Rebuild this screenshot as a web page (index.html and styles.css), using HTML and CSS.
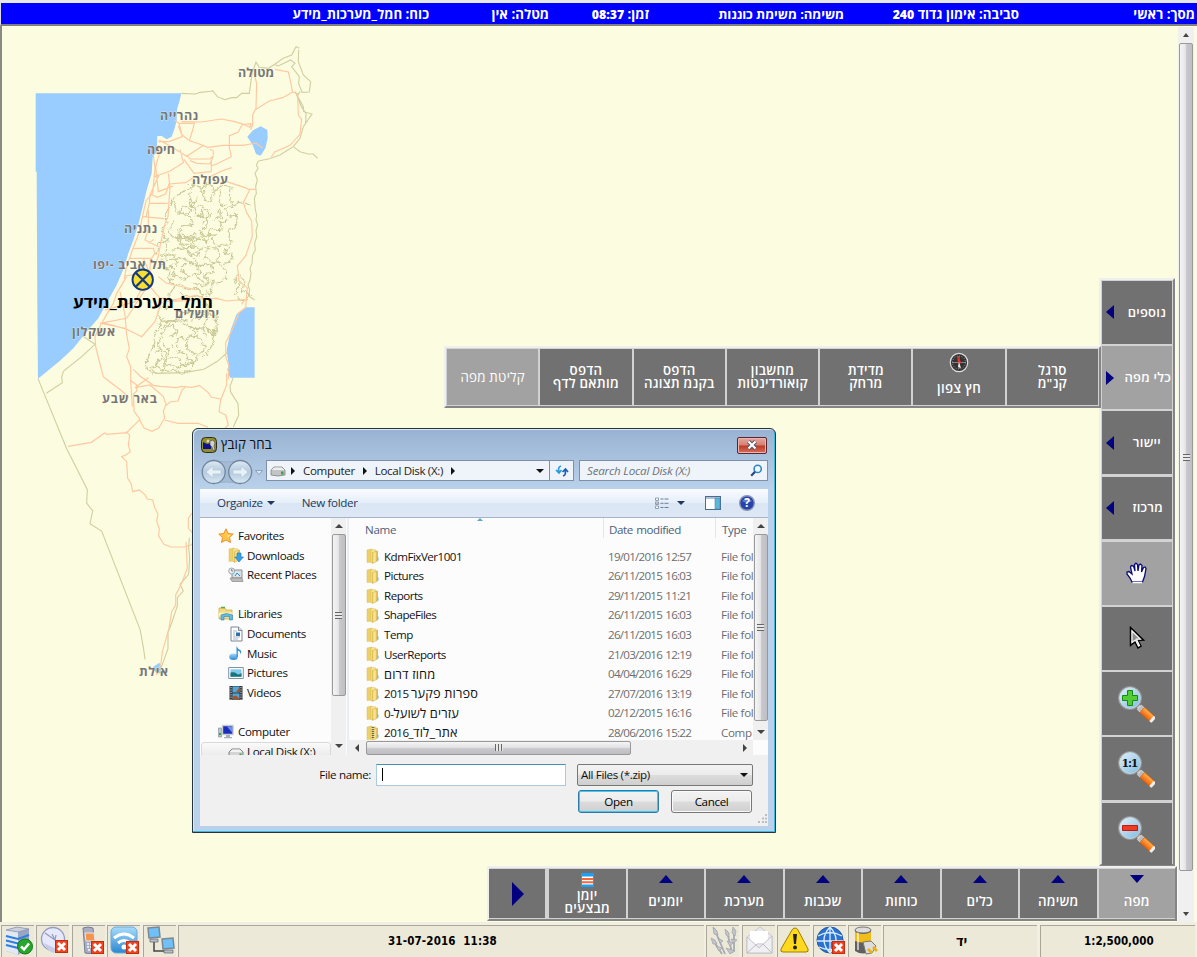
FILE: index.html
```html
<!DOCTYPE html>
<html lang="he">
<head>
<meta charset="utf-8">
<title>מסך ראשי</title>
<link rel="stylesheet" href="styles.css">
</head>
<body>
<svg class="defs" width="0" height="0" aria-hidden="true">
  <defs>
    <linearGradient id="gold" x1="0" x2="1" y1="0" y2="0"><stop offset="0" stop-color="#f0d264"/><stop offset=".5" stop-color="#faeaa0"/><stop offset="1" stop-color="#d3a530"/></linearGradient>
    <linearGradient id="glass" x1="0" x2="1" y1="0" y2="1"><stop offset="0" stop-color="#e4f3fb"/><stop offset="1" stop-color="#7cb9de"/></linearGradient>
    <linearGradient id="handle" x1="0" x2="0" y1="0" y2="1"><stop offset="0" stop-color="#ffb24a"/><stop offset="1" stop-color="#f0600c"/></linearGradient>
    <linearGradient id="orb" x1="0" x2="0" y1="0" y2="1"><stop offset="0" stop-color="#dfe9f4"/><stop offset=".5" stop-color="#b4cade"/><stop offset="1" stop-color="#d8e8f4"/></linearGradient>
    <linearGradient id="blueface" x1="0" x2="0" y1="0" y2="1"><stop offset="0" stop-color="#a8dcfa"/><stop offset="1" stop-color="#2b87d0"/></linearGradient>
    <symbol id="folder" viewBox="0 0 14 16"><path d="M1 2l5-1v13l-5 .5z" fill="#ecd06a" stroke="#dcbd5a" stroke-width=".5"/><path d="M5 1.500l5 .5v11l-5 2z" fill="#f8e690" stroke="#d8b650" stroke-width=".5"/><path d="M6.500 4.500l5-1.500v10l-5 2.500z" fill="url(#gold)" stroke="#cda63a" stroke-width=".5"/><path d="M11.300 9.500h1.200v3h-1.200z" fill="#6abbe0"/></symbol>
    <symbol id="lens" viewBox="0 0 38 38"><path d="M21 21l4 4" stroke="#ccc" stroke-width="4"/><g transform="rotate(42 23 23)"><rect x="22" y="20" width="5" height="6" fill="#bbb" stroke="#eee" stroke-width=".6"/><rect x="26" y="19.500" width="14" height="7" rx="1" fill="url(#handle)" stroke="#d95700" stroke-width=".6"/><rect x="38.500" y="19.500" width="3" height="7" rx="1" fill="#eee"/></g><circle cx="13" cy="13" r="11.300" fill="url(#glass)" stroke="#929292" stroke-width="1.600"/><circle cx="13" cy="13" r="10.500" fill="none" stroke="#c9dce8" stroke-width=".8"/></symbol>
    <symbol id="xmark" viewBox="0 0 13 13"><rect x=".5" y=".5" width="12" height="12" fill="#ef4321" stroke="#c42c10"/><path d="M3 3l7 7M10 3l-7 7" stroke="#fff" stroke-width="3"/></symbol>
  </defs>
</svg>
<div class="app">
  <header class="banner" dir="rtl">
    <span>מסך: ראשי</span><span>סביבה: אימון גדוד <b>240</b></span><span>משימה: משימת כוננות</span><span>זמן: <b>08:37</b></span><span>מטלה: אין</span><span>כוח: חמל_מערכות_מידע</span>
  </header>

  <main class="stage">
    <svg class="map" viewBox="0 26 1178 896">
      <defs><filter id="rough" x="-5%" y="-5%" width="110%" height="110%"><feTurbulence type="fractalNoise" baseFrequency=".06" numOctaves="3" seed="4"/><feDisplacementMap in="SourceGraphic" scale="22" xChannelSelector="R" yChannelSelector="G"/></filter></defs>
      <g transform="translate(20 30) scale(.33333)">
        <g fill="#99ccff">
          <path d="M47 190H484L478 215 471 238 470 272 463 298 455 320 440 328 425 318 412 318 410 365 398 382 395 430 380 480 368 530 356 580 340 630 325 670 310 718 290 765 262 815 235 865 200 905 160 955 120 992 54 1046 52 830 50 425H47z"/>
          <path d="M682 320l18-20 22-11 20 11 1 25-7 30-14 22-14-5-10-27z"/>
          <path d="M676 832H704V1043H630L622 1020 626 1005 620 960 632 900 650 852z"/>
          <path d="M398 1912l20-14 5 12-1 20-14-2z"/>
        </g>
        <g class="border">
          <path d="M484 190l42 2 15-5 32-3 5-2 14 18 23 9 20-6h15l15-13h23l8-60 12-33 10 15 27 3 17-11 28-19 25-10 13-25 10 5"/>
          <path d="M765 104l10 4 37-18 13 10-10 10 23 30-2 20 10 27 22-1 4-31-22-20-15-40 1-35M840 185l-8 12 18 33 1 15 25 7-26 38-10 35-20 25-20 12-20 13-32 11-33 7M826 185l18 45 14 20-1 30M820 350l20 15 25 7h15l13 13"/>
          <path d="M715 393l-6 12 5 10-9 15 7 20-5 20 2 20-6 15 3 35 4 15-2 15 5 15-5 15 2 20-6 20 2 20-8 15-2 25-6 15 3 15-3 20-6 15 5 15-3 18 18 12"/>
          <path d="M188 918l37 25-40 37-55 44-5 18 2 16-48 32M54 1046l86 210 48 95 14 28-2 40 18 24-8 38 35 22 115 295 3 15 8 45 4 30M640 1043l-10 25 2 18 22 35 2 35-16 35"/>
          <path d="M508 1523l-2 30 3 30-3 50-26 30 10 20-18 20v25l-20 60-8 18v50l-18 50-10 25"/>
        </g>
        <g class="border dense">
          <path d="M515 465l30 6 20-12 20 25 20-18 25 2-2 35 10 25-22 10 16 24 20-8-2 28-20 16-6 20 10 20-22 30 24 5-6 24-28 5 20 25-12 30-30 2-10 30-14 20 12 20-12 22-46-4-26 4-26 26-26-4-20-18 6-20 34-10-6-30 18-24-20-20 6-30-30-16 18-24-30-10 8-30 28-10-20-28 18-22-4-26 16-40 22-20z"/>
          <path d="M460 508l10 40 40 5 10 30-38 8-4 32 24 8 34-10-20 30-42 8M515 465l-6 30 10 36 32-6-10 38 22-8-20 28M470 600l20 30 30-16 40 22 10-40 40 4-10-24 22-6M545 471l8 40 20 4 10-30M455 660l40-10 20 24 36-22 20 10M560 650l-6 34 26 12 20-22-16-20zM440 690l50-6 40 24 50-6 26-8M450 730l40 20 34-16 26 30 34-14M520 760l30 10 20-10M500 700l-20 20 30 20 30-10-10-25"/>
          <path d="M535 500l-20 25 12 30 30 5 5 30-24 12 14 18 34-6M465 575l-20 25 15 20 24 4-6 20 28 12M425 630l16 20-6 24 28 8 6 20M430 720l26-12 10 30-22 14 20 20M590 610l-16 20 22 20 24-6M520 690l24 18 30-6 6 24-30 10 24 22M485 535l18-6 10 16-14 12-16-8zM545 545l14-8 8 14-14 10z"/>
          <path d="M470 620l20-8 10 14 24-4-10 22-30-2zM500 655l24-6 16 14-10 16-22-4zM565 560l30-20 10 20-24 14M460 770l24-8 14 16 30-6 20 20 30-10M480 790l30 10 40-4M600 480l-6 34 20 12M640 525l20-8 35 12"/>
          <path d="M648 745l8 25-12 20 26 22 24-18-30-10 10-35-20-14z"/>
          <path d="M425 870l-15 30-6 40-10 20-15 40 4 20 20 10 26-8 10-14-20-20-24 30M425 870l35 2 20-8 25 8 30-6 30-18 20 10 4 40-10 40-20 36-30 5-10 20-40 12-40-10-16-26-8-30 14-40 26-30 40-4M425 940l24 20-14 30 40-10 10 30 25-30-40-20 10-40 30 10 16-30-40-20M500 925l30-10 25 35-5 15-20 10-30-20zM565 860l-10 30 30 20M550 880l30 40 6-30"/>
          <path d="M415 905l20-20 30 5 5 20-25 10M405 1005l30 20 30-5 15 15 30-12 10-30-24-10M500 880l20 20 30-4 6 20M410 960l30 6 20-16"/>
        </g>
        <path class="border" d="M395 1018l12 12 85-2 60-10 40-24 32-28"/>
        <g class="road">
          <path d="M484 275l60 1 60-9 40 8 27 8 22-2-4 13M702 130l8 30-2 75-10 20v30l-6 15M765 118l40 8 13 60-30 17-40 10-42 26M818 186l15 5 2 65 10 12-5 45-30 33-46 20-10 15M415 335h32l40-15-10-40-13-10M478 280h45l-5 20-10 32 30 10 25 10 46-6h60l39-7 20 15M690 292l-22-10-14 25-26 10v35l6 28-44 22-16 6M505 330l-20-17-10-25M552 345l-52 34-48-30-34-18M480 358l10 40-40 25-50 18M574 425l-52 5-30-42M500 375l10 12h60l10-10-10 25-40-2-20-8M574 425V390M580 375v-12l-10-5M570 440l30-15 35-12M417 435l-27 60-2 25-10 40M400 375l5 40-7 75-20 22-10 45-10 50-20 50-20 60-5 30M415 345l2 30-10 35 8 75 45-17M392 492l20 10 25-10 10-30 50-4 30-20M445 430l5 40-6 90-8 18-13 55-8 45-10 30M388 520h55M368 560l65 6M385 540v60l-10 30 40 20M340 655h60l5 15-14 20-2 65M330 685h60l5 15M370 685l30 70M386 640l15-12M360 760l30 10-30 15-15 30-90 25M315 738l30-5 30 30M415 740l25 20 90 20M390 770l30 35h30M620 455l55 18 10 5h22M690 478l-20 40 10 30 15 25 2 45-20 60-25 30 5 45 25 20-5 60-20 15-20 50-20 40v40l10 30-2 40"/>
          <path d="M320 740l-30 50-10 30-15 25-20 35-20 40 2 30 15 60 8 30 12 10 40 30 24 22M300 785l15 70 5 60 8 40-8 25 12 30v40l5 80M240 880l80-15 35-55 20-30M245 880l70 15 50 25 40-45 20-60M245 878l70 18M440 814l60-2 30-5 60-2 30 8 55-5-10 15M450 812l80-16 20 8M340 1018l20 20 40 28 20 3 50 4 14-4 30 3 25-5 25 20 10 15 30 5"/>
          <path d="M330 1050l20 15v18l-10 10 2 50 18 25-40 40-60 5-6-4-40 28-70 12M358 1168l14 26 24 10 20-10 18-30-4-20 8-20-8-24-40-35-45 8 40-30M434 1130l16-14 24-3 12-33 10-8M434 1170l40 10h60l30 12M620 1030v35l-18 45-5 35 20 10 8 30-20 20M317 1205l12 10-4 30 6 20-14 10-12 5 15 15 3 50 10 15 5 25 20-5 18 15 6 12 16 3 6 23 10 20-4 20 8 25-2 20 16 25 20 8h40l20-5 14-13 15-10M498 1535l4 80-15 40-20 40v30l-12 20-8 50-20 70-4 35-14 35M515 1450l-10 15v30l14 15"/>
        </g>
      </g>
      <g class="places">
        <text x="238" y="76.500" textLength="36">מטולה</text><text x="160" y="119.500" textLength="38">נהרייה</text><text x="147" y="154" textLength="28">חיפה</text><text x="192" y="183.500" textLength="36">עפולה</text><text x="124" y="233" textLength="33">נתניה</text><text x="93" y="268.500" textLength="73">תל אביב -יפו</text><text x="175" y="317.500" textLength="44">ירושלים</text><text x="72" y="336" textLength="43">אשקלון</text><text x="102" y="402.500" textLength="55">באר שבע</text><text x="139" y="675.500" textLength="29">אילת</text>
      </g>
      <g><circle cx="142.700" cy="279.700" r="10.200" fill="#f8df32" stroke="#153a80" stroke-width="1.900"/><path d="M136 273l13.500 13.500M149.500 273L136 286.500" stroke="#153a80" stroke-width="2.200"/></g>
      <text class="unit" x="73" y="307.500" textLength="140" lengthAdjust="spacingAndGlyphs">חמל_מערכות_מידע</text>
    </svg>

    <div class="vscroll outer-scroll"><i class="tri up"></i><div class="thumb"><b class="grip"></b></div><i class="tri down"></i></div>

    <nav class="panel side">
      <div class="btn arrow"><i class="tri left"></i><span>נוספים</span></div>
      <div class="btn arrow lit"><i class="tri right"></i><span class="wide">כלי מפה</span></div>
      <div class="btn arrow"><i class="tri left"></i><span class="mid">יישור</span></div>
      <div class="btn arrow"><i class="tri left"></i><span class="near">מרכוז</span></div>
      <div class="btn lit"><svg width="22" height="22" viewBox="0 0 22 22"><path d="M6 20L4 16 1 12V10l2-.5 3 2.500L4.500 5l1-1.500 2 .5L9 9 8.500 2.500l1.500-1.300L11.500 2.500 12 9l1-6 1.500-1L16 3.500 15.500 10l2-4.500L19 5l1 1.500-1.500 8L16.500 20z" fill="#fff" stroke="#0a0a78" stroke-width="1.300"/><path d="M6.500 20.500h9.800" stroke="#fff" stroke-width="1.500"/></svg></div>
      <div class="btn"><svg width="18" height="24" viewBox="0 0 18 24"><path d="M2.500 1.500l13 12.500-5.500.3 3 6-3 1.700L7 16l-4.500 3.500z" fill="#8f8f8f" stroke="#000" stroke-width="1.500"/><path d="M4 5v11.300L7.500 14l3 6 1-.5-3-6.300h3.700z" fill="none" stroke="#f4f4f4" stroke-width="1.200"/></svg></div>
      <div class="btn zoom"><svg width="38" height="38"><use href="#lens"/><path d="M10.500 5.500h5v5h5v5h-5v5h-5v-5h-5v-5h5z" fill="#54cc35" stroke="#178a10"/></svg></div>
      <div class="btn zoom"><svg width="38" height="38"><use href="#lens"/><text x="13" y="17.300" class="ratio" textLength="17">1:1</text></svg></div>
      <div class="btn zoom"><svg width="38" height="38"><use href="#lens"/><path d="M5.500 10.500h15v5h-15z" fill="#f03a24" stroke="#bd1c10"/></svg></div>
    </nav>

    <nav class="panel tools" dir="rtl">
      <div class="btn"><span>סרגל<br>קנ"מ</span></div>
      <div class="btn compass"><svg width="20" height="22" viewBox="0 0 20 22"><ellipse cx="10" cy="10.500" rx="8.700" ry="9.200" fill="#333" stroke="#ddd" stroke-width="1.200"/><circle cx="10" cy="10.500" r="6.500" fill="none" stroke="#999" stroke-dasharray="1 1.500"/><path d="M3 10.500h14M10 4v13" stroke="#aaa" stroke-width=".7"/><path d="M8.500 4l3.500 7-3-1z" fill="#f03030" stroke="#f03030" stroke-width=".5"/><path d="M10 10l2 6-3-1z" fill="#eee"/></svg><span>חץ צפון</span></div>
      <div class="btn"><span>מדידת<br>מרחק</span></div>
      <div class="btn"><span>מחשבון<br>קואורדינטות</span></div>
      <div class="btn"><span>הדפס<br>בקנמ תצוגה</span></div>
      <div class="btn"><span>הדפס<br>מותאם לדף</span></div>
      <div class="btn lit"><span>קליטת מפה</span></div>
    </nav>

    <nav class="panel bottom" dir="rtl">
      <div class="btn lit"><i class="tri down"></i><span>מפה</span></div>
      <div class="btn"><i class="tri up"></i><span>משימה</span></div>
      <div class="btn"><i class="tri up"></i><span>כלים</span></div>
      <div class="btn"><i class="tri up"></i><span>כוחות</span></div>
      <div class="btn"><i class="tri up"></i><span>שכבות</span></div>
      <div class="btn"><i class="tri up"></i><span>מערכת</span></div>
      <div class="btn"><i class="tri up"></i><span>יומנים</span></div>
      <div class="btn log"><svg width="13" height="14" viewBox="0 0 13 14"><rect width="13" height="14" rx="1" fill="#1da0f2"/><path d="M1 3.500h11v8H1z" fill="#fff"/><path d="M1 6h11M1 9.300h11" stroke="#f26a3c" stroke-width="2"/></svg><span>יומן<br>מבצעים</span></div>
      <div class="btn next"><i class="tri right big"></i></div>
    </nav>

    <section class="dialog">
      <div class="caption">
        <svg width="16" height="16"><rect x=".5" y=".5" width="15" height="15" rx="4" fill="#92902a" stroke="#2e2d14"/><path d="M2 5l4 2 4-1v6H2z" fill="#10108c"/><circle cx="7" cy="4" r="1.500" fill="#d8d8c0"/><path d="M9 4l3-1 2 3-1 3 1 4-2 .5L11 10 9 8z" fill="#d2d2d2" stroke="#444" stroke-width=".6"/></svg>
        <h1>בחר קובץ</h1>
        <button class="close"><svg width="12" height="10" viewBox="0 0 12 10"><path d="M2.500 1.500l7 7M9.500 1.500l-7 7" stroke="#4b4f63" stroke-width="4"/><path d="M2.500 1.500l7 7M9.500 1.500l-7 7" stroke="#fff" stroke-width="2.300"/></svg></button>
      </div>
      <div class="navrow">
        <svg class="orbs" width="64" height="26" viewBox="0 0 64 26"><path d="M13 1q14 4 27 0v24q-13-4-27 0z" fill="#a5bcd5" stroke="#8fa6c1" stroke-width=".7"/><g fill="url(#orb)" stroke="#70869c" stroke-width="1.300"><circle cx="13.700" cy="13" r="11.500"/><circle cx="40.200" cy="13" r="11.500"/></g><path d="M6 13l7-6v4h8v4h-8v4zM48 13l-7-6v4h-8v4h8v4z" fill="#e8f1f8" stroke="#b6c8d8" stroke-width=".7"/><path d="M55.500 11.500h7l-3.500 4z" fill="#dce8f4" stroke="#7f96b0" stroke-width=".8"/></svg>
        <div class="address"><svg width="16" height="12" viewBox="0 0 16 12"><path d="M1 5l3-3h8l3 3v5q-7 2-14 0z" fill="#c2c4c6" stroke="#777" stroke-width=".7"/><path d="M1.500 5l3-2.500h7l3 2.500z" fill="#eee"/><path d="M11 6.500h2.500v3H11z" fill="#35a73a"/></svg><i class="tri right"></i><span>Computer</span><i class="tri right"></i><span>Local Disk (X:)</span><i class="tri right"></i><em></em><i class="tri down"></i><b><svg width="14" height="14" viewBox="0 0 14 14"><path d="M6 2Q2.500 3 4 8M1 6l3 3 2.500-3" fill="none" stroke="#2a9ae0" stroke-width="1.700"/><path d="M8 12q3.500-1 2-6M7.500 8l3-3L13 8" fill="none" stroke="#1e5fb4" stroke-width="1.700"/></svg></b></div>
        <div class="search"><span>Search Local Disk (X:)</span><svg width="13" height="13" viewBox="0 0 13 13"><circle cx="7.700" cy="4.900" r="3.600" fill="#eef6fc" stroke="#2f86c6" stroke-width="1.600"/><path d="M5 7.800L1.200 11.700" stroke="#24468e" stroke-width="2.200"/></svg></div>
      </div>
      <div class="client">
        <div class="toolbar"><span>Organize</span><i class="tri down"></i><span class="newf">New folder</span><em></em>
          <svg width="15" height="13" viewBox="0 0 15 13"><path d="M1.500 1h3v2.500h-3zM1.500 5h3v2.500h-3zM1.500 9h3v2.500h-3z" fill="#fff" stroke="#8b9eb8"/><path d="M2.300 5.800h1.500v1H2.300z" fill="#d76a3a"/><path d="M6.500 2h3m1 0h4M6.500 6.300h3m1 0h4M6.500 10.500h3m1 0h4" stroke="#6c7d96"/></svg><i class="tri down view"></i>
          <svg class="preview" width="16" height="14"><rect x=".5" y=".5" width="15" height="13" fill="#fff" stroke="#506a8a"/><path d="M1 2h14" stroke="#a8c4dc" stroke-width="2"/><rect x="10" y="2" width="5" height="11" fill="#58b8dc" stroke="#4d87a8" stroke-width=".6"/></svg>
          <svg class="help" width="16" height="16"><circle cx="8" cy="8" r="7.300" fill="#2543a8" stroke="#8b93b5" stroke-width="1.400"/><path d="M3 6q5-5 10 0-5 3-10 0" fill="#5f80d2"/><text x="8" y="12.200" class="q">?</text></svg>
        </div>
        <div class="panes">
          <div class="places-pane">
            <ul>
              <li><svg width="16" height="16" viewBox="0 0 16 16"><path d="M8 .8l2.200 4.700 5 .6-3.700 3.400 1 5L8 12l-4.500 2.500 1-5L.8 6.100l5-.6z" fill="#ffc646" stroke="#ea8425" stroke-width=".9"/><path d="M8 3l1.500 4 3 .5-2.500 2" fill="#ffe58a"/></svg>Favorites</li>
              <li class="sub"><svg width="16" height="16" viewBox="0 0 16 16"><use href="#folder" width="14" height="16"/><path d="M9 6h4v4h2.500L11 15 6.800 10H9z" fill="#38a0e8" stroke="#1976bc" stroke-width=".6"/></svg>Downloads</li>
              <li class="sub"><svg width="16" height="16" viewBox="0 0 16 16"><path d="M4 3h10v8H4z" fill="#ddd" stroke="#8c9196"/><path d="M2 11h12l1 3.500H4z" fill="#bbb" stroke="#888" stroke-width=".7"/><path d="M6 5h5v4H6z" fill="#d7edfa"/><path d="M7 9l2-3 3 3" stroke="#3484c0" fill="none"/><circle cx="3.700" cy="4" r="3" fill="#e9eef2" stroke="#8995a0" stroke-width=".8"/><path d="M3.700 2v2h1.500" stroke="#555" fill="none" stroke-width=".7"/></svg>Recent Places</li>
              <li class="gap"></li>
              <li><svg width="16" height="16" viewBox="0 0 16 16"><path d="M1 2h6l1 2h6v9H1z" fill="#f3dc80" stroke="#c9a73d" stroke-width=".7"/><path d="M3 1.500h4" stroke="#52b043" stroke-width="1.500"/><path d="M.8 6.500h13.500v4H.8z" fill="#fbefb1"/><path d="M3 14V9q5-3 11.500 0v5h-3v-3.500H6V14z" fill="#61b9e6" stroke="#2c86bb" stroke-width=".6"/></svg>Libraries</li>
              <li class="sub"><svg width="16" height="16" viewBox="0 0 16 16"><path d="M3 1h7.500L14 4.500V15H3z" fill="#fff" stroke="#7b8794"/><path d="M10.500 1v3.500H14" fill="#d8e2ea" stroke="#7b8794"/><path d="M5 5h4M5 7h2M5 9h2M5 11h7M5 13h5" stroke="#a7b6c4"/><path d="M8 6.500h4v3.500H8z" fill="#2f6fb0"/></svg>Documents</li>
              <li class="sub"><svg width="16" height="16" viewBox="0 0 16 16"><ellipse cx="5.500" cy="11.700" rx="4.300" ry="3.300" fill="url(#blueface)"/><path d="M8.500 12V1q1 3 4 4 1.500 2 .3 4.500Q12.300 6 9.800 5.500V12z" fill="#2c8dd6"/></svg>Music</li>
              <li class="sub"><svg width="16" height="16" viewBox="0 0 16 16"><path d="M.7 2.500h14.600v11H.7z" fill="#fff" stroke="#8392a0"/><path d="M2.500 4.300h11v7.400h-11z" fill="#7ecbef"/><path d="M2.500 7.500q4-1 6 1t5-.5v3.700h-11z" fill="#19747c"/></svg>Pictures</li>
              <li class="sub"><svg width="16" height="16" viewBox="0 0 16 16"><path d="M1.500 1h13v14h-13z" fill="#31363c"/><path d="M4.500 1.500h7v6h-7zM4.500 8.500h7v6h-7z" fill="#52a8dc"/><path d="M4.500 12q3-4 7 2v.5h-7zM8 7l3-4v4" fill="#a3562c"/><path d="M3 2v13M13 2v13" stroke="#ddd" stroke-dasharray="1.200 1.200"/></svg>Videos</li>
              <li class="gap"></li>
              <li><svg width="16" height="16" viewBox="0 0 16 16"><path d="M.5 4h3v9h-3z" fill="#bbc4ca" stroke="#808a92" stroke-width=".6"/><path d="M1 9h2v2H1z" fill="#3cab35"/><path d="M4.500 1.500h10.500v9H4.500z" fill="#1b2fbc" stroke="#c5ccd4" stroke-width="1.400"/><path d="M9 2.500l5 0v6z" fill="#6f8ff0"/><path d="M8 11h4v2h2v1.200H6V13h2z" fill="#a8b0b8"/></svg>Computer</li>
              <li class="sub chosen"><svg width="16" height="16" viewBox="0 0 16 16"><path d="M1 9l3-3h8l3 3v5H1z" fill="#d2d4d6" stroke="#666" stroke-width=".8"/><path d="M1.500 9l3-2.500h7l3 2.500z" fill="#f2f2f2"/><path d="M11.500 10.500h2v3h-2z" fill="#35a73a"/></svg>Local Disk (X:)</li>
            </ul>
            <div class="vscroll"><i class="tri up"></i><div class="thumb"><b class="grip"></b></div><i class="tri down"></i></div>
          </div>
          <div class="files">
            <div class="listing">
              <div class="list">
                <div class="row head"><span>Name<i class="sort"></i></span><span>Date modified</span><span>Type</span></div>
                <div class="row"><span><svg class="ic"><use href="#folder"/></svg>KdmFixVer1001</span><span>19/01/2016 12:57</span><span>File folder</span></div>
                <div class="row"><span><svg class="ic"><use href="#folder"/></svg>Pictures</span><span>26/11/2015 16:03</span><span>File folder</span></div>
                <div class="row"><span><svg class="ic"><use href="#folder"/></svg>Reports</span><span>29/11/2015 11:21</span><span>File folder</span></div>
                <div class="row"><span><svg class="ic"><use href="#folder"/></svg>ShapeFiles</span><span>26/11/2015 16:03</span><span>File folder</span></div>
                <div class="row"><span><svg class="ic"><use href="#folder"/></svg>Temp</span><span>26/11/2015 16:03</span><span>File folder</span></div>
                <div class="row"><span><svg class="ic"><use href="#folder"/></svg>UserReports</span><span>21/03/2016 12:19</span><span>File folder</span></div>
                <div class="row"><span><svg class="ic"><use href="#folder"/></svg><bdi>מחוז דרום</bdi></span><span>04/04/2016 16:29</span><span>File folder</span></div>
                <div class="row"><span><svg class="ic"><use href="#folder"/></svg><bdo dir="ltr">2015 <bdi>ספרות פקער</bdi></bdo></span><span>27/07/2016 13:19</span><span>File folder</span></div>
                <div class="row"><span><svg class="ic"><use href="#folder"/></svg><bdo dir="ltr">0-<bdi>עזרים לשועל</bdi></bdo></span><span>02/12/2015 16:16</span><span>File folder</span></div>
                <div class="row"><span><svg class="ic" viewBox="0 0 14 16"><use href="#folder" width="14" height="16"/><path d="M7 2v12" stroke="#666" stroke-width="2.500" stroke-dasharray="1 1"/></svg><bdo dir="ltr">2016_<bdi>אתר_לוד</bdi></bdo></span><span>28/06/2016 15:22</span><span class="comp">Comp</span></div>
              </div>
              <div class="vscroll"><i class="tri up"></i><div class="thumb"><b class="grip"></b></div><i class="tri down"></i></div>
            </div>
            <div class="hscroll"><i class="tri left"></i><div class="thumb"><b class="grip"></b></div><i class="tri right"></i></div>
          </div>
        </div>
        <div class="form">
          <label>File name:</label><div class="field"><i></i></div>
          <div class="combo"><span>All Files (*.zip)</span><i class="tri down"></i></div>
          <button class="open">Open</button><button class="cancel">Cancel</button>
          <svg class="sizer" width="10" height="10"><path d="M8 1h2M5 4.500h2M8 4.500h2M1 8h2M5 8h2M8 8h2" stroke="#bdbdbd" stroke-width="2"/></svg>
        </div>
      </div>
    </section>
  </main>

  <footer class="status">
    <div><svg width="30" height="30" viewBox="0 0 30 30"><path d="M2 4l11-3 12 2v19l-11 7L2 25z" fill="#9ba5c4"/><path d="M2 4l12 2v23L2 25z" fill="#e3e8f5"/><path d="M2 4l11-3 12 2-11 3z" fill="#c8cfdf" stroke="#7e87a2" stroke-width=".6"/><path d="M2 10l12 3 11-4M2 14.500l12 3 11-4M2 19l12 3" fill="none" stroke="#2e7edb" stroke-width="2"/><circle cx="21" cy="20.500" r="7.500" fill="#29a62d" stroke="#0d7814"/><path d="M17 20.500l3 3 5-6" fill="none" stroke="#fff" stroke-width="2.500"/></svg></div>
    <div><svg width="30" height="30" viewBox="0 0 30 30"><circle cx="14" cy="13" r="11.500" fill="#e6e8fc" stroke="#969bc0" stroke-width="1.300"/><path d="M6 7l10 7 1-5M16 14l-3-6" fill="none" stroke="#9499ba" stroke-width="1.200"/><path d="M5 17q3 8 10 10l2-4" fill="#c6cbe7"/><use href="#xmark" x="16" y="14" width="13" height="13"/></svg></div>
    <div><svg width="30" height="30" viewBox="0 0 30 30"><path d="M8 2q5-2 10 0l2 23q-5 4-10 2z" fill="#a9aec2" stroke="#777d93"/><path d="M10 7h9l1 8h-9z" fill="#f6954a" stroke="#e6e6ee"/><path d="M12 18h8M12 21h8M13 24h7" stroke="#e4e7f0" stroke-width="2" stroke-dasharray="2 1"/><use href="#xmark" x="16" y="15" width="13" height="13"/></svg></div>
    <div><svg width="30" height="30" viewBox="0 0 30 30"><rect x="1" y="1" width="26" height="26" rx="5" fill="url(#blueface)" stroke="#64abd9"/><path d="M4 12q10-8 20 0M8 17q6-5 12 0" fill="none" stroke="#fff" stroke-width="3"/><circle cx="14" cy="21" r="2.500" fill="#fff"/><use href="#xmark" x="16" y="15" width="13" height="13"/></svg></div>
    <div><svg width="30" height="30" viewBox="0 0 30 30"><path d="M8 14v11h10" fill="none" stroke="#444" stroke-width="1.500"/><path d="M2 2l11-1 1 10-11 1z" fill="#6fc0f7" stroke="#7b8894" stroke-width="1.500"/><path d="M16 13l11-1 1 10-11 1z" fill="#6fc0f7" stroke="#7b8894" stroke-width="1.500"/><path d="M4 13h8v3H4zM18 24h9v3h-9z" fill="#b9bec4" stroke="#5d646b" stroke-width=".7"/></svg></div>
    <div class="clock">31-07-2016&nbsp; 11:38</div>
    <div><svg width="30" height="30" viewBox="0 0 30 30"><g fill="none" stroke="#a9abb2" stroke-width="1.800"><path d="M5 2l11 26M4 14l9 14M18 5l5 22M25 3v22"/></g><g fill="#c3c5cc" stroke="#96989f" stroke-width=".6"><path d="M4 1l4 4 1 4-4-1zM2 12l4 2 2 4-4 0zM16 3l4 4v4l-3-2zM24 1l3 4-1 5-3-3zM9 12l5 3-3 2zM7 20l6 2-3 3zM18 15l6 2-3 3zM22 13l6 1-4 3zM17 22l9 3-5 3z"/></g></svg></div>
    <div><svg width="30" height="30" viewBox="0 0 30 30"><path d="M2 11L15 1l12 9v17H2z" fill="#e8e8ee" stroke="#c7c7ce"/><path d="M5 5h18v14H5z" fill="#fff"/><path d="M2 11l12 11 13-12v17H2z" fill="#efeff4" stroke="#c3c3ca"/><path d="M2 27l10-9h6l9 9" fill="none" stroke="#bbb"/></svg></div>
    <div><svg width="30" height="30" viewBox="0 0 30 30"><path d="M15 2q2 0 3 2l10 19q1 3-2 3H3q-3 0-2-3L12 4q1-2 3-2z" fill="#ffd91e" stroke="#a17a00"/><path d="M13 8h4l-1 10h-2z" fill="#222"/><circle cx="15" cy="21.500" r="2" fill="#222"/></svg></div>
    <div><svg width="30" height="30" viewBox="0 0 30 30"><circle cx="14" cy="14" r="13" fill="#2b72d0" stroke="#2458a2"/><path d="M2 10q12-7 24 0M1 15h26M3 21q11 5 22 0M14 1q-12 13 0 26M14 1q12 13 0 26M14 1v26" fill="none" stroke="#d9edff" stroke-width="1.300"/><use href="#xmark" x="16" y="15" width="13" height="13"/></svg></div>
    <div><svg width="30" height="30" viewBox="0 0 30 30"><path d="M4 4v21q8 5 16 0V4z" fill="#606060"/><path d="M4 6q8 4 16 0v9q-7 3-16 0z" fill="#f3bd18"/><path d="M7 6v18" stroke="#fff" stroke-width="2" opacity=".6"/><ellipse cx="12" cy="4" rx="8" ry="3" fill="#ddd" stroke="#777"/><path d="M12 16l8-1 5 5-4 7-6 1z" fill="#ddd" stroke="#777"/><path d="M17 23l4 4M22 21l4 4" stroke="#e8b215" stroke-width="2.800"/></svg></div>
    <div class="mode">יד</div>
    <div class="scale">1:2,500,000</div>
  </footer>
</div>
</body>
</html>
```
FILE: styles.css
```css
* { box-sizing: border-box; }
body { margin: 0; overflow: hidden; background: #ece9d8; font: 11.6px/1 "Open Sans", "Noto Sans", sans-serif; }
.defs { position: absolute; }
.app { width: 1197px; height: 957px; display: flex; flex-direction: column; }
svg { display: block; flex: none; }

.banner { display: grid; grid-template-columns: 176px 175px 195px 100px 120px 1fr; height: 26px; padding: 2px 2px 0 0; border-top: 3px solid #e6e9e4; border-bottom: 2px solid #808080; background: #0000fe; color: #fff; font: bold 13.3px/18px "Open Sans", sans-serif; white-space: nowrap; border-left: 1px solid #ddd; }
.banner span:nth-child(3) { font-size: 13.1px; letter-spacing: -.1px; }
.banner b { font-size: 12.3px; }

.stage { position: relative; height: 896px; background: #fcfce0; border-left: 2px solid #8a8a84; overflow: hidden; }
.map { position: absolute; left: -2px; top: 0; width: 1178px; height: 896px; }
.border { fill: none; stroke: #cfcf9f; stroke-width: 3.300; }
.dense { stroke: #c8c896; stroke-width: 3.200; filter: url(#rough); }
.road { fill: none; stroke: #ffc8a0; stroke-width: 3.500; }
.places text { font: bold 12.500px "Open Sans", sans-serif; fill: #77777a; stroke: #fcfce0; stroke-width: .5; paint-order: stroke; }
.unit { font: bold 16px "Open Sans", sans-serif; fill: #000; }

.tri { width: 0; height: 0; flex: none; border: 0 solid transparent; color: #000080; }
.tri.up { border-width: 0 4px 4px; border-bottom-color: currentColor; }
.tri.down { border-width: 4px 4px 0; border-top-color: currentColor; }
.tri.left { border-width: 4px 4px 4px 0; border-right-color: currentColor; }
.tri.right { border-width: 4px 0 4px 4px; border-left-color: currentColor; }

.vscroll { display: flex; flex-direction: column; align-items: center; width: 15px; background: #f0f0f0; }
.vscroll .tri, .hscroll .tri { color: #444; }
.vscroll .thumb { width: 14px; display: flex; align-items: center; justify-content: center; border: 1px solid #999; border-radius: 2px; background: linear-gradient(90deg, #f5f5f5, #e6e6e9 45%, #c8c8cc 55%, #c0c0c4); }
.vscroll .grip { width: 7px; height: 7px; background: repeating-linear-gradient(#666 0 1px, #e9e9e9 1px 3px); }
.outer-scroll { position: absolute; left: 1176px; top: 1px; width: 16px; height: 895px; }
.outer-scroll .thumb { height: 828px; margin: 6px 0 41px; }
.outer-scroll .tri { border-left-width: 3px; border-right-width: 3px; }

.panel { position: absolute; display: flex; background: #d2d2d2; border: 2px solid; border-color: #efefef #858585 #858585 #efefef; color: #fff; font-size: 13.3px; letter-spacing: .25px; font-weight: 600; line-height: 13px; text-align: center; }
.btn { display: flex; align-items: center; justify-content: center; background: #717171; }
.btn.lit { background: #a2a2a2; }
.side { left: 1097px; top: 252px; width: 76px; height: 588px; padding: 1px; display: grid; grid-template-rows: repeat(9, 62.8px); gap: 2.400px; font-size: 13px; }
.side .arrow { justify-content: space-between; padding: 0 6px 0 4px; }
.side .arrow .mid { margin-right: 5px; }
.side .arrow .near { margin-right: 3px; }
.side .arrow span.wide { margin-right: -5px; }
.side .zoom svg { margin-left: -2px; }
.side .tri { border-top-width: 7px; border-bottom-width: 7px; }
.side .tri.left { border-right-width: 8px; }
.side .tri.right { border-left-width: 8px; }
.ratio { font: bold 11px "DejaVu Serif", serif; letter-spacing: 0; text-anchor: middle; fill: #111; }
.tools { left: 442px; top: 320px; width: 657px; height: 62px; gap: 2px; padding: 1px; }
.tools .btn { flex: 1; }
.tools .lit { font-weight: 400; }
.tools .compass { flex-direction: column; justify-content: flex-start; gap: 8px; padding-top: 3px; }
.bottom { left: 485px; top: 840px; width: 690px; height: 55px; gap: 2px; padding: 1px 0; }
.bottom .btn { width: 76.500px; flex-direction: column; justify-content: flex-start; padding-top: 6px; gap: 12px; }
.bottom .tri { border-left-width: 7px; border-right-width: 7px; }
.bottom .tri.up { border-bottom-width: 8px; }
.bottom .tri.down { border-top-width: 8px; }
.bottom .log { padding-top: 4px; gap: 2px; }
.bottom .next { flex: 1; justify-content: center; padding: 0 0 0 2px; margin-right: 2px; }
.bottom .tri.big { border-width: 12px 0 12px 12px; }

.dialog { position: absolute; left: 190px; top: 402px; width: 584px; height: 405px; padding: 0 7px 6px; border: 1px solid #24333c; border-radius: 6px 6px 0 0; background: linear-gradient(#98b3d2, #b9d1ea 60px); box-shadow: inset -1px -1px #37b9e0, inset 1px 1px #dce9f6; color: #111; display: flex; flex-direction: column; letter-spacing: -.35px; }
.caption { display: flex; height: 30px; align-items: center; padding: 2px 1px 0; }
.caption h1 { flex: 1; margin: 0 0 0 4px; font-size: 13.3px; letter-spacing: .1px; font-weight: 400; }
.close { display: grid; place-items: center; width: 30px; height: 17px; padding: 0; border: 1px solid #5a2530; border-radius: 2px; background: linear-gradient(#e6a79e, #d77f72 48%, #bd3a24 52%, #d3705c); box-shadow: inset 0 0 0 1px #eeb5ac; }
.navrow { display: flex; height: 30px; padding-top: 1px; color: #222; }
.orbs { margin: -1px 2px 0 0; }
.address, .search { display: flex; align-items: center; height: 21px; border: 1px solid #7e8fa6; background: #eff4fb; margin-top: 0; }
.address { width: 308px; padding-left: 3px; margin-right: 5px; }
.address .tri { color: #111; margin: 0 8px; }
.address svg + .tri { margin-left: 5px; }
.address em { flex: 1; }
.address .tri.down { margin: 0 5px; }
.address b { display: grid; place-items: center; height: 19px; width: 24px; border-left: 1px solid #7e8fa6; }
.search { flex: 1; justify-content: space-between; padding: 0 4px 0 7px; color: #6d7278; font-style: italic; letter-spacing: -.2px; }
.client { flex: 1; background: #f0f0f0; }
.toolbar { display: flex; align-items: center; height: 29px; padding: 0 13px 0 17px; color: #1e395b; background: linear-gradient(#fafcff, #e5eef9 48%, #dae6f4 52%, #dde7f5); border-bottom: 1px solid #a6b4c8; }
.toolbar em { flex: 1; }
.toolbar .tri { color: #1e395b; margin-left: 4px; }
.toolbar .view { margin: 0 20px 0 8px; }
.newf { margin-left: 27px; }
.preview { margin-right: 18px; }
.q { font: bold 12px "Open Sans", sans-serif; fill: #fff; text-anchor: middle; }
.panes { display: flex; height: 237px; background: #fcfcfc; }
.places-pane { display: flex; width: 149px; overflow: hidden; border-right: 2px solid #e9eef5; }
.places-pane ul { list-style: none; margin: 0; padding: 8px 0 0 1px; width: 131px; }
.places-pane li { display: flex; align-items: center; gap: 4px; height: 19.600px; padding-left: 17px; white-space: nowrap; }
.places-pane li.sub { padding-left: 27px; gap: 3px; }
.places-pane li.chosen { padding-left: 26px; background: linear-gradient(#fafafa, #e6e6e6); border: 1px solid #d9d9d9; border-radius: 3px; }
.vscroll .tri.up { margin-top: 6px; }
.places-pane .thumb { height: 162px; margin: 6px 0 48px; }
.files { flex: 1; display: flex; flex-direction: column; }
.listing { display: flex; height: 222px; }
.list { width: 404px; overflow: hidden; }
.row { display: grid; grid-template-columns: 254px 112px 80px; height: 19.600px; align-items: center; white-space: nowrap; color: #6d6d6d; }
.row span { padding-left: 5px; }
.row span:nth-child(2) { letter-spacing: -.75px; word-spacing: 1px; }
.row.head span:nth-child(2) { letter-spacing: -.45px; }
.row span:first-child { display: flex; align-items: center; gap: 4px; padding-left: 17px; color: #111; letter-spacing: -.5px; }
.row span:nth-child(3) { padding-left: 6px; }
.row bdi { font-size: 12.800px; letter-spacing: .15px; }
.row.head { height: 28px; align-items: stretch; line-height: 24px; margin-bottom: .7px; }
.row.head span, .row.head span:first-child { color: #4c607a; position: relative; display: block; }
.row.head span:first-child { padding-left: 16px; letter-spacing: -.3px; }
.row.head span + span { border-left: 1px solid #dfe8f2; height: 20px; }
.sort { position: absolute; left: 128px; top: 0; border: 3px solid transparent; border-top-width: 0; border-bottom-color: #5aa6cc; }
.ic { width: 14px; height: 16px; }
.listing .thumb { height: 187px; margin: 6px 0 9px; }
.hscroll { display: flex; align-items: center; height: 15px; width: 404px; background: #f0f0f0; padding: 0 6px; }
.hscroll .thumb { width: 265px; height: 14px; margin: 0 auto 0 7px; display: grid; place-items: center; border: 1px solid #999; border-radius: 2px; background: linear-gradient(#f5f5f5, #e2e2e5 45%, #cacace 55%, #bdbdc2); }
.hscroll .grip { width: 8px; height: 7px; background: repeating-linear-gradient(90deg, #666 0 1px, #e9e9e9 1px 3px); }
.form { display: grid; grid-template-columns: 171px 190px 86px 90px 15px; column-gap: 5px; padding-top: 9px; align-items: start; height: 70px; position: relative; grid-template-rows: 26px 23px; }
.form label { text-align: right; line-height: 22px; }
.field { height: 22px; background: #fff; border: 1px solid #a9cbe2; border-top-color: #4d8cb6; padding: 3px 5px; }
.field i { display: block; height: 13px; border-left: 1px solid #000; }
.combo { grid-column: 3 / 5; margin: 0 -1px 0 6px; display: flex; width: 176px; justify-content: space-between; align-items: center; height: 22px; padding: 0 4px 0 3px; border: 1px solid #777; border-radius: 2px; background: linear-gradient(#f3f3f3, #ebebeb 49%, #dcdcdc 51%, #cfcfcf); }
.combo .tri { color: #111; }
.form button { height: 23px; width: 81px; padding: 0; font: inherit; letter-spacing: inherit; border: 1px solid #777; border-radius: 3px; background: linear-gradient(#f3f3f3, #ebebeb 49%, #dcdcdc 51%, #cfcfcf); box-shadow: inset 0 0 0 1px #fafafa; }
.form .open { grid-column: 3; margin-left: 7px; border-color: #2c7ba6; box-shadow: inset 0 0 0 1px #43c7f4; }
.form .cancel { grid-column: 4; margin-left: 9px; }
.sizer { position: absolute; right: 1px; bottom: 1px; }

.status { flex: 1; display: grid; grid-template-columns: 33px 33px 33px 33px 33px 526px 33px 33px 33px 33px 33px 154px 1fr; gap: 2.400px; padding: 3px 2px 0 1px; background: #f1efe2; font: bold 11.500px/31px "DejaVu Sans Condensed", "DejaVu Sans", sans-serif; text-align: center; }
.status div { height: 32px; background: #ece9d8; border-top: 1.500px solid #aaa798; border-left: 1.500px solid #aaa798; padding-left: 2px; overflow: hidden; }
.clock { letter-spacing: .15px; }
.mode { font-family: "Open Sans", sans-serif; font-size: 13px; }
```
